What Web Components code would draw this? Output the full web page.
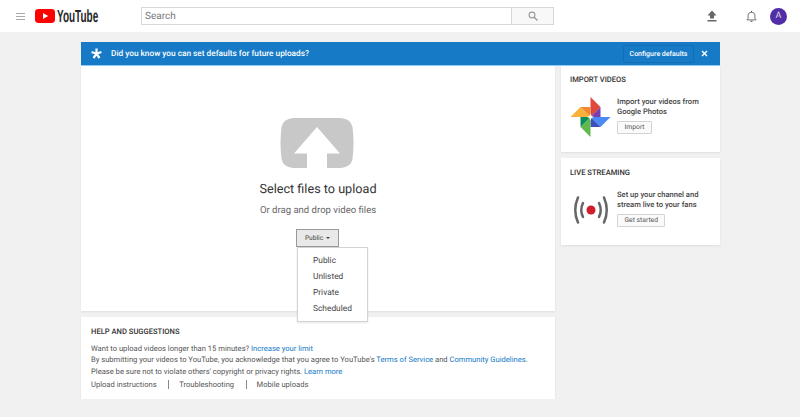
<!DOCTYPE html>
<html>
<head>
<meta charset="utf-8">
<title>Upload</title>
<style>
  html, body { margin: 0; padding: 0; background: #f1f1f1; }
  body { font: 8.5px/12px Roboto, "Liberation Sans", sans-serif; color: #333; text-rendering: geometricPrecision; }
</style>
</head>
<body>
<yt-masthead></yt-masthead>
<upload-page>
  <upload-banner slot="banner">Did you know you can set defaults for future uploads?</upload-banner>
  <upload-drop slot="main"></upload-drop>
  <help-card slot="main"></help-card>
  <side-card slot="side" heading="IMPORT VIDEOS" line1="Import your videos from" line2="Google Photos" action="Import" kind="photos" style="height:86px;--pad:8px"></side-card>
  <side-card slot="side" heading="LIVE STREAMING" line1="Set up your channel and" line2="stream live to your fans" action="Get started" kind="live" style="height:87px;--pad:9px"></side-card>
</upload-page>

<script>
class YtMasthead extends HTMLElement {
  constructor() {
    super();
    this.attachShadow({ mode: 'open' });
    this.shadowRoot.innerHTML = `
      <style>
        :host { display: flex; align-items: center; height: 32px; background: #fff; box-sizing: border-box; }
        .menu { margin-left: 16px; width: 9px; height: 7px; display: block; flex: none; }
        .logo { margin-left: 10px; display: flex; align-items: center; width: 71px; flex: none; }
        .logo svg { flex: none; display: block; }
        .word { font: 700 17.5px/20px "Liberation Sans", sans-serif; color: #282828; margin-left: 2px; transform: scaleX(.57); transform-origin: left center; white-space: nowrap; }
        .search { margin-left: 35px; display: flex; width: 413px; height: 18px; box-sizing: border-box; border: 1px solid #d8d8d8; box-shadow: inset 0 1px 1px #eee; flex: none; }
        .field { flex: 1; padding: 1px 0 0 3px; font: 10px/16px Roboto, sans-serif; color: #777; background: #fff; }
        .btn { width: 41px; background: #f8f8f8; border-left: 1px solid #d8d8d8; display: flex; align-items: center; justify-content: center; }
        .right { margin-left: auto; display: flex; align-items: center; }
        .up { display: block; margin-right: 29px; }
        .bell { display: block; margin-right: 13px; }
        .avatar { width: 17px; height: 17px; margin-right: 13px; border-radius: 50%; background: #512da8; color: #ddd; font: 9px/17px Roboto, sans-serif; text-align: center; }
      </style>
      <svg class="menu" viewBox="0 0 9 7"><path d="M0 .5h9M0 3.500h9M0 6.500h9" stroke="#aaa" stroke-width="1"/></svg>
      <div class="logo">
        <svg width="20" height="14" viewBox="0 0 20 14"><rect width="20" height="14" rx="3.4" fill="#f00"/><path d="M8 4v6l5.200-3z" fill="#fff"/></svg>
        <span class="word">YouTube</span>
      </div>
      <div class="search">
        <div class="field">Search</div>
        <div class="btn"><svg width="10" height="10" viewBox="0 0 10 10"><circle cx="4" cy="4" r="2.9" fill="none" stroke="#999" stroke-width="1.1"/><path d="M6.200 6.200 9.400 9.400" stroke="#999" stroke-width="1.4"/></svg></div>
      </div>
      <div class="right">
        <svg class="up" width="10" height="12" viewBox="0 0 10 12"><path d="M5 .5 9.500 5.500H7V8.500H3V5.500H.5zM.5 10h9v1.500h-9z" fill="#666"/></svg>
        <svg class="bell" width="11" height="13" viewBox="0 0 12 13"><path d="M1 10.200h10L9.700 8.600V5.200C9.700 3.200 8.200 2 6 2S2.300 3.200 2.300 5.200v3.400z" fill="none" stroke="#666" stroke-width="1"/><path d="M6 .3v1.600" stroke="#666" stroke-width="1.1"/><path d="M4.600 11.200a1.400 1.400 0 0 0 2.800 0z" fill="#666"/></svg>
        <div class="avatar">A</div>
      </div>
    `;
  }
}

class UploadPage extends HTMLElement {
  constructor() {
    super();
    this.attachShadow({ mode: 'open' });
    this.shadowRoot.innerHTML = `
      <style>
        :host { display: block; padding: 10px 80px 0 81px; }
        .cols { display: flex; gap: 6px; }
        .main { width: 474px; display: flex; flex-direction: column; gap: 6px; }
        .side { width: 159px; display: flex; flex-direction: column; gap: 6px; }
      </style>
      <slot name="banner"></slot>
      <div class="cols">
        <div class="main"><slot name="main"></slot></div>
        <div class="side"><slot name="side"></slot></div>
      </div>
    `;
  }
}

class UploadBanner extends HTMLElement {
  constructor() {
    super();
    this.attachShadow({ mode: 'open' });
    this.shadowRoot.innerHTML = `
      <style>
        :host { display: flex; align-items: center; background: #167ac6; border-bottom: 1px solid #8fcbf5; box-sizing: content-box; height: 23px; color: #fff; }
        .star { margin-left: 10px; width: 11px; height: 11px; display: block; }
        .msg { margin-left: 9px; font: 500 8.27px/12px Roboto, sans-serif; }
        .cfg { margin-left: auto; width: 71px; height: 18px; box-sizing: border-box; text-align: center; border: 1px solid #126db3; border-radius: 2px; font: 500 7px/16px Roboto, sans-serif; }
        .x { margin: 0 12px 0 7px; width: 7px; height: 7px; display: block; }
      </style>
      <svg class="star" viewBox="0 0 11 11"><path d="M5.500 5.800V.6M5.500 5.800 10.400 4M5.500 5.800 8.500 10M5.500 5.800 2.500 10M5.500 5.800 .6 4" stroke="#fff" stroke-width="2.200"/></svg>
      <span class="msg"><slot></slot></span>
      <span class="cfg">Configure defaults</span>
      <svg class="x" viewBox="0 0 7 7"><path d="M1 1 6 6M6 1 1 6" stroke="#fff" stroke-width="1.400"/></svg>
    `;
  }
}

class UploadDrop extends HTMLElement {
  constructor() {
    super();
    this.attachShadow({ mode: 'open' });
    this.shadowRoot.innerHTML = `
      <style>
        :host { display: flex; flex-direction: column; align-items: center; height: 245px; background: #fff; box-shadow: 0 1px 2px rgba(0,0,0,.08); position: relative; }
        .art { display: block; margin: 52px 2px 0 0; }
        h2 { margin: 14px 0 0; font: 400 12.65px/16px Roboto, sans-serif; color: #333; }
        p { margin: 6px 0 0; font: 400 9.56px/14px Roboto, sans-serif; color: #666; }
        .privacy { margin: 11px 1px 0 0; position: relative; display: block; }
        .btn { width: 43px; height: 18px; box-sizing: border-box; display: flex; align-items: center; justify-content: center; gap: 3px; background: #e9e9e9; border: 1px solid #999; font: 6.6px/12px Roboto, sans-serif; color: #444; }
        .caret { width: 0; height: 0; border: 2.5px solid transparent; border-top-color: #444; border-bottom: 0; }
        ul { position: absolute; left: 1px; top: 18px; margin: 0; padding: 5px 0 0 15px; list-style: none; width: 71px; height: 75px; box-sizing: border-box; background: #fff; border: 1px solid #d3d3d3; box-shadow: 0 1px 2px rgba(0,0,0,.1); font: 8.37px/16px Roboto, sans-serif; color: #444; z-index: 2; }
      </style>
      <svg class="art" width="74" height="50" viewBox="0 0 74 50">
        <path d="M13 0H61Q71 1 72.500 9 74.500 25 72.500 41 71 49 61 50H13Q3 49 1.500 41-.5 25 1.500 9 3 1 13 0z" fill="#c8c8c8"/>
        <path d="M37 9 60 35.500H47V50H27V35.500H14z" fill="#fff"/>
      </svg>
      <h2>Select files to upload</h2>
      <p>Or drag and drop video files</p>
      <div class="privacy">
        <div class="btn">Public <i class="caret"></i></div>
        <ul><li>Public</li><li>Unlisted</li><li>Private</li><li>Scheduled</li></ul>
      </div>
    `;
  }
}

class HelpCard extends HTMLElement {
  constructor() {
    super();
    this.attachShadow({ mode: 'open' });
    this.shadowRoot.innerHTML = `
      <style>
        :host { display: block; height: 82px; box-sizing: border-box; padding: 9px 10px 0; background: #fff; box-shadow: 0 1px 2px rgba(0,0,0,.08); font: 7.6px/11.700px Roboto, sans-serif; color: #555; }
        h3 { margin: 0 0 4.500px; font: 500 7.6px/12px Roboto, sans-serif; color: #333; }
        a { color: #167ac6; text-decoration: none; }
        .links { display: flex; align-items: center; height: 13px; }
        .links span { height: 9px; line-height: 9px; }
        .links span + span { margin-left: 11.500px; padding-left: 10px; border-left: 1px solid #888; }
      </style>
      <h3>HELP AND SUGGESTIONS</h3>
      <div>Want to upload videos longer than 15 minutes? <a>Increase your limit</a></div>
      <div>By submitting your videos to YouTube, you acknowledge that you agree to YouTube's <a>Terms of Service</a> and <a>Community Guidelines</a>.</div>
      <div>Please be sure not to violate others' copyright or privacy rights. <a>Learn more</a></div>
      <div class="links"><span>Upload instructions</span><span>Troubleshooting</span><span>Mobile uploads</span></div>
    `;
  }
}

class SideCard extends HTMLElement {
  constructor() {
    super();
    this.attachShadow({ mode: 'open' });
    const photos = `<svg width="41" height="40" viewBox="0 0 40 40">
      <path d="M20 0 30 10 20 20z" fill="#e0493a"/>
      <path d="M30 10V20H20z" fill="#7a3eb1"/>
      <path d="M40 20 30 30 20 20z" fill="#4a8af4"/>
      <path d="M30 30H20V20z" fill="#3b4fb8"/>
      <path d="M20 40 10 30 20 20z" fill="#62b84f"/>
      <path d="M10 30V20H20z" fill="#0b8f5a"/>
      <path d="M0 20 10 10 20 20z" fill="#fbb03b"/>
      <path d="M10 10H20V20z" fill="#f08a32"/>
      <path d="M20 16.500 21 19 23.500 20 21 21 20 23.500 19 21 16.500 20 19 19z" fill="#fff"/>
    </svg>`;
    const live = `<svg width="37" height="28" viewBox="0 0 37 28">
      <circle cx="18" cy="14" r="4.500" fill="#d01f2a"/>
      <g fill="none" stroke="#666" stroke-width="2.500" stroke-linecap="round">
        <path d="M10 7Q6.500 14 10 21M26 7Q29.500 14 26 21"/>
        <path d="M5 1.500Q-.5 14 5 26.500M31 1.500Q36.500 14 31 26.500"/>
      </g>
    </svg>`;
    const kind = this.getAttribute('kind');
    this.shadowRoot.innerHTML = `
      <style>
        :host { display: block; box-sizing: border-box; padding: var(--pad) 10px 0 9px; background: #fff; box-shadow: 0 1px 2px rgba(0,0,0,.08); }
        h3 { margin: 0; font: 500 7.6px/12px Roboto, sans-serif; color: #333; }
        .row { display: flex; margin-top: 11px; }
        .pic { width: 47px; flex: none; }
        .pic svg { display: block; margin: ${kind === 'photos' ? '0' : '6px 0 0 3px'}; }
        .txt { font: 500 7.6px/9.500px Roboto, sans-serif; color: #444; white-space: nowrap; }
        .btn { display: block; width: fit-content; box-sizing: border-box; margin-top: 5px; padding: 0 6.500px; height: 13px; font: 400 6.75px/11px Roboto, sans-serif; background: #fafafa; border: 1px solid #d3d3d3; border-radius: 1px; color: #555; }
      </style>
      <h3>${this.getAttribute('heading')}</h3>
      <div class="row">
        <div class="pic">${kind === 'photos' ? photos : live}</div>
        <div class="txt">${this.getAttribute('line1')}<br>${this.getAttribute('line2')}<span class="btn">${this.getAttribute('action')}</span></div>
      </div>
    `;
  }
}

customElements.define('yt-masthead', YtMasthead);
customElements.define('upload-page', UploadPage);
customElements.define('upload-banner', UploadBanner);
customElements.define('upload-drop', UploadDrop);
customElements.define('help-card', HelpCard);
customElements.define('side-card', SideCard);
</script>
</body>
</html>
